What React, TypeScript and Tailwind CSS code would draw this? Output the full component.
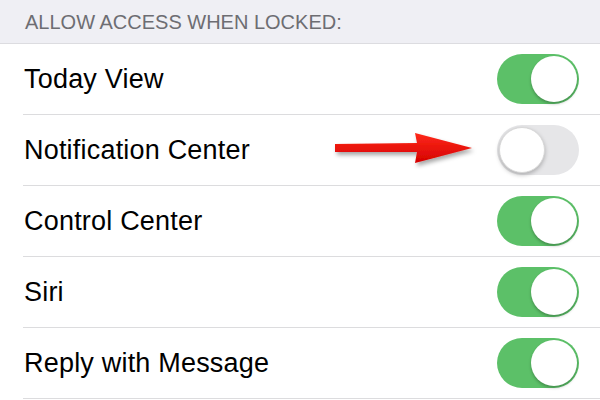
import React from "react";

const rows = [
  { label: "Today View", on: true },
  { label: "Notification Center", on: false, arrow: true },
  { label: "Control Center", on: true },
  { label: "Siri", on: true },
  { label: "Reply with Message", on: true },
];

function Toggle({ on }: { on: boolean }) {
  if (on) {
    return (
      <div className="w-[82px] h-[50px] rounded-full bg-[#5cc068] flex items-center justify-end p-[2px]">
        <div className="w-[46px] h-[46px] rounded-full bg-white shadow-[0_2px_3px_rgba(0,0,0,0.25)]" />
      </div>
    );
  }
  return (
    <div className="w-[82px] h-[50px] rounded-full bg-[#e6e6e8] flex items-center justify-start p-[2px]">
      <div className="w-[46px] h-[46px] rounded-full bg-white border border-[#d8d8d8] shadow-[0_2px_4px_rgba(0,0,0,0.25)]" />
    </div>
  );
}

function Arrow() {
  return (
    <svg width="146" height="40" viewBox="0 0 146 40" className="mr-[18px]">
      <defs>
        <linearGradient id="rg" x1="0" y1="0" x2="0" y2="1">
          <stop offset="0" stopColor="#ff2a1a" />
          <stop offset="1" stopColor="#d40000" />
        </linearGradient>
        <filter id="sh" x="-10%" y="-30%" width="120%" height="170%">
          <feDropShadow dx="2" dy="3" stdDeviation="2" floodColor="#000" floodOpacity="0.35" />
        </filter>
      </defs>
      <path d="M2 14 L84 13 L82 3 L139 18 L82 33 L84 22 L2 22 Z" fill="url(#rg)" filter="url(#sh)" />
    </svg>
  );
}

export default function App() {
  return (
    <div className="w-[600px] h-[400px] overflow-hidden bg-white" style={{ fontFamily: "'Liberation Sans', Arial, sans-serif" }}>
      <div className="h-[44px] bg-[#efeff4] border-b border-[#dcdce0] flex items-center pl-[25px] pt-[1px]">
        <span className="text-[20px] text-[#6d6d72]">ALLOW ACCESS WHEN LOCKED:</span>
      </div>
      {rows.map((r) => (
        <div key={r.label} className="pl-[23px]">
          <div className="h-[71px] border-b border-[#dcdcde] flex items-center pr-[21px]">
            <span className="flex-1 text-[27px] tracking-[0.2px] text-black pl-[1px]">{r.label}</span>
            {r.arrow && <Arrow />}
            <Toggle on={r.on} />
          </div>
        </div>
      ))}
    </div>
  );
}
